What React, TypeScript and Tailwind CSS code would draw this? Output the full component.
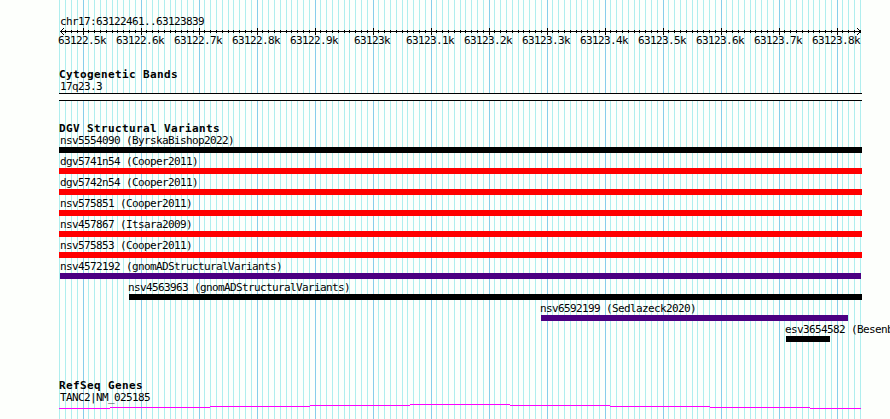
const LEFT = 59;

const variants = [
  { id: 'nsv5554090 (ByrskaBishop2022)', start: 59, end: 862, color: 'bg-black' },
  { id: 'dgv5741n54 (Cooper2011)', start: 59, end: 862, color: 'bg-[#ff0000]' },
  { id: 'dgv5742n54 (Cooper2011)', start: 59, end: 862, color: 'bg-[#ff0000]' },
  { id: 'nsv575851 (Cooper2011)', start: 59, end: 862, color: 'bg-[#ff0000]' },
  { id: 'nsv457867 (Itsara2009)', start: 59, end: 862, color: 'bg-[#ff0000]' },
  { id: 'nsv575853 (Cooper2011)', start: 59, end: 862, color: 'bg-[#ff0000]' },
  { id: 'nsv4572192 (gnomADStructuralVariants)', start: 60, end: 861, color: 'bg-[#4b0082]' },
  { id: 'nsv4563963 (gnomADStructuralVariants)', start: 129, end: 862, color: 'bg-black' },
  { id: 'nsv6592199 (Sedlazeck2020)', start: 541, end: 848, color: 'bg-[#4b0082]' },
  { id: 'esv3654582 (Besenb', start: 786, end: 830, color: 'bg-black' },
];

const rulerLabels = [
  '63122.5k', '63122.6k', '63122.7k', '63122.8k', '63122.9k', '63123k', '63123.1k',
  '63123.2k', '63123.3k', '63123.4k', '63123.5k', '63123.6k', '63123.7k', '63123.8k',
];

// one line every 10 bp, a major one every 100 bp
const ticks = Array.from({ length: 139 }, (_, i) => ({
  x: Math.round(59.4 + i * 5.8),
  major: i % 10 === 4,
}));

// the intron line rises and falls one pixel at a time
const geneSteps = [
  [59, 110, 4], [110, 210, 3], [210, 310, 2], [310, 410, 1], [410, 510, 0],
  [510, 610, 1], [610, 710, 2], [710, 810, 3], [810, 861, 4],
];

function GridLines() {
  return (
    <svg className="absolute inset-0" width="890" height="419" shapeRendering="crispEdges">
      {ticks.map((t) => (
        <rect key={t.x} x={t.x} y="0" width="1" height="419" fill={t.major ? '#87ceeb' : '#afeeee'} />
      ))}
    </svg>
  );
}

function Label({ children }: { children: string }) {
  return (
    <div className="h-3 text-[11px] leading-[14px] tracking-[-0.622px] whitespace-pre">{children}</div>
  );
}

function TrackTitle({ children }: { children: string }) {
  return (
    <h2 className="h-3 pl-[59px] text-[11px] leading-[14px] font-bold tracking-[0.378px] whitespace-pre">{children}</h2>
  );
}

function Ruler() {
  return (
    <div className="h-[34px] pt-[15px]">
      <div className="pl-[60px]">
        <Label>chr17:63122461..63123839</Label>
      </div>
      <svg className="block overflow-visible" width="890" height="7" shapeRendering="crispEdges">
        <rect x="60" y="4" width="801" height="1" />
        {ticks.slice(1).map((t) => (
          <rect key={t.x} x={t.x} y={t.major ? 1 : 3} width="1" height={t.major ? 7 : 3} />
        ))}
        <path d="M60 4h1v1h-1zM61 3h1v1h-1zM62 2h1v1h-1zM63 1h1v1h-1zM61 5h1v1h-1zM62 6h1v1h-1zM63 7h1v1h-1z" />
        <path d="M860 4h1v1h-1zM859 3h1v1h-1zM858 2h1v1h-1zM857 1h1v1h-1zM859 5h1v1h-1zM858 6h1v1h-1zM857 7h1v1h-1z" />
      </svg>
    </div>
  );
}

export default function App() {
  return (
    <div className="relative h-[419px] w-[890px] overflow-hidden bg-[#fdfffc] font-['DejaVu_Sans_Mono','Liberation_Mono',monospace] text-black">
      <GridLines />
      <main className="relative">
        <Ruler />
        <div className="flex pl-[53px]">
          {rulerLabels.map((label) => (
            <div key={label} className="flex w-[58px] shrink-0 justify-center">
              <Label>{label}</Label>
            </div>
          ))}
        </div>

        <section className="pt-[22px]">
          <TrackTitle>Cytogenetic Bands</TrackTitle>
          <div className="pl-[60px]">
            <Label>17q23.3</Label>
          </div>
          <div className="mt-px ml-[59px] h-2 w-[803px] border-y border-black bg-[#fdfffc]" />
        </section>

        <section className="pt-[21px]">
          <TrackTitle>DGV Structural Variants</TrackTitle>
          {variants.map((v) => (
            <div key={v.id} className="h-[21px]">
              <div className="h-[13px]" style={{ paddingLeft: Math.max(LEFT + 1, v.start - 1) }}>
                <Label>{v.id}</Label>
              </div>
              <div className={`h-1.5 ${v.color}`} style={{ marginLeft: v.start, width: v.end - v.start }} />
            </div>
          ))}
        </section>

        <section className="pt-[35px]">
          <TrackTitle>RefSeq Genes</TrackTitle>
          <div className="pl-[60px]">
            <Label>TANC2|NM_025185</Label>
          </div>
          <svg className="mt-px block" width="890" height="8" shapeRendering="crispEdges">
            {geneSteps.map(([from, to, y]) => (
              <rect key={from} x={from} y={y} width={to - from} height="1" fill="#ff00ff" />
            ))}
          </svg>
        </section>
      </main>
    </div>
  );
}
